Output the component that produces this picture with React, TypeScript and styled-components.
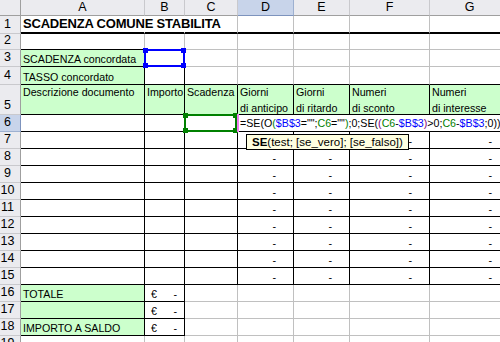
import React from 'react';
import styled, { createGlobalStyle } from 'styled-components';

const Global = createGlobalStyle`
  html, body { margin: 0; padding: 0; background: #ffffff; overflow: hidden; }
  body { width: 500px; height: 342px; font-family: "Liberation Sans", Arial, sans-serif; }
`;

const GRID = '#c0c0c0';
const INK = '#000000';
const GREEN = '#ccffcc';
const NONE = 'transparent';
const HEAD_BG = '#ebebef';
const HEAD_SEL = '#c8d4ea';

const COLS = [21, 124, 40, 53, 56, 56, 80, 80];
// header row + rows 1..19 (heights include bottom border)
const ROW_H = [16, 18, 16, 17, 18, 30, 17, 17, 17, 17, 17, 17, 17, 17, 17, 17, 17, 17, 17, 17];

const Sheet = styled.div`
  position: relative;
  width: 500px;
  height: 342px;
  overflow: hidden;
  display: grid;
  grid-template-columns: ${COLS.map((c) => `${c}px`).join(' ')};
  grid-template-rows: ${ROW_H.map((h) => `${h}px`).join(' ')};
  font-family: "Liberation Sans", Arial, sans-serif;
  color: #000;
`;

const Corner = styled.div`
  box-sizing: border-box;
  background: ${HEAD_BG};
  border-right: 1px solid #9f9f9f;
  border-bottom: 1px solid #9f9f9f;
`;

const ColHead = styled.div<{ $sel?: boolean }>`
  box-sizing: border-box;
  background: ${(p) => (p.$sel ? HEAD_SEL : HEAD_BG)};
  border-right: 1px solid ${(p) => (p.$sel ? '#9db0d0' : '#c9c9cd')};
  border-bottom: 1px solid ${(p) => (p.$sel ? '#7d93bd' : '#9f9f9f')};
  display: flex;
  align-items: center;
  justify-content: center;
  font-size: 12.5px;
  line-height: 15px;
`;

const RowHead = styled.div<{ $sel?: boolean }>`
  box-sizing: border-box;
  background: ${(p) => (p.$sel ? HEAD_SEL : HEAD_BG)};
  border-right: 1px solid ${(p) => (p.$sel ? '#7d93bd' : '#9f9f9f')};
  border-bottom: 1px solid ${(p) => (p.$sel ? '#9db0d0' : '#c9c9cd')};
  display: flex;
  align-items: flex-end;
  justify-content: center;
  padding: 0 5px 2px 0;
  font-size: 12.5px;
  line-height: 14px;
  white-space: nowrap;
`;

const Cell = styled.div<{
  $bg?: string;
  $r: string;
  $b: string;
  $bw?: number;
  $al?: 'l' | 'r' | 'sp';
  $top?: boolean;
}>`
  box-sizing: border-box;
  min-width: 0;
  background: ${(p) => p.$bg || NONE};
  border-right: 1px solid ${(p) => p.$r};
  border-bottom: ${(p) => p.$bw || 1}px solid ${(p) => p.$b};
  display: flex;
  align-items: ${(p) => (p.$top ? 'flex-start' : 'flex-end')};
  justify-content: ${(p) => (p.$al === 'r' ? 'flex-end' : p.$al === 'sp' ? 'space-between' : 'flex-start')};
  padding: ${(p) => (p.$al === 'r' ? '0 17px 0 0' : p.$al === 'sp' ? '0 7px 0 6px' : '0 1px 0 2px')};
  font-size: 10.67px;
  line-height: ${(p) => (p.$top ? '16px' : '13px')};
  white-space: nowrap;
`;

const Title = styled.span`
  font-size: 13px;
  font-weight: bold;
  line-height: 15px;
  padding-bottom: 1px;
  letter-spacing: -0.2px;
`;

const Wrap = styled.span`
  margin-top: -1px;
`;

/* overlays: range references and in-cell editor lying over the grid */
const RangeBox = styled.div<{ $c: string }>`
  position: absolute;
  box-sizing: border-box;
  border: 2px solid ${(p) => p.$c};
  pointer-events: none;
`;

const Handle = styled.span<{ $c: string; $x: 'l' | 'r'; $y: 't' | 'b' }>`
  position: absolute;
  width: 5px;
  height: 5px;
  background: ${(p) => p.$c};
  ${(p) => (p.$x === 'l' ? 'left: -3px;' : 'right: -3px;')}
  ${(p) => (p.$y === 't' ? 'top: -3px;' : 'bottom: -3px;')}
`;

const EditMark = styled.div`
  position: absolute;
  left: 237px;
  top: 114px;
  width: 2px;
  height: 18px;
  background: #f080f0;
`;

const Editor = styled.div`
  position: absolute;
  left: 239px;
  top: 115px;
  width: 270px;
  height: 16px;
  background: #ffffff;
  padding-left: 1px;
  font-size: 10.67px;
  line-height: 16px;
  white-space: nowrap;
`;

const Tok = styled.span<{ $c: string }>`
  color: ${(p) => p.$c};
`;

const Tip = styled.div`
  position: absolute;
  left: 246px;
  top: 134px;
  height: 16px;
  box-sizing: border-box;
  background: #ffffe1;
  border: 1px solid #000000;
  padding: 0 5px;
  font-size: 11.5px;
  line-height: 14px;
  white-space: nowrap;
`;

type CellDef = {
  t?: React.ReactNode;
  bg?: string;
  r: string;
  b: string;
  bw?: number;
  al?: 'l' | 'r' | 'sp';
  top?: boolean;
};

const grid = (): CellDef => ({ r: GRID, b: GRID });
const boxed = (t?: React.ReactNode, bg?: string, al?: 'l' | 'r' | 'sp'): CellDef => ({ t, bg, r: INK, b: INK, al });

const Euro = () => (
  <>
    <span>€</span>
    <span>-</span>
  </>
);

const rows: CellDef[][] = [];
// row 1
rows.push([
  { t: <Title>SCADENZA COMUNE STABILITA</Title>, r: NONE, b: INK, bw: 2 },
  { r: NONE, b: INK, bw: 2 },
  ...Array.from({ length: 5 }, () => ({ r: GRID, b: INK, bw: 2 })),
]);
// row 2
rows.push([{ r: GRID, b: INK }, { r: GRID, b: INK }, ...Array.from({ length: 5 }, grid)]);
// row 3
rows.push([boxed('SCADENZA concordata', GREEN), boxed(), ...Array.from({ length: 5 }, grid)]);
// row 4
rows.push([boxed('TASSO concordato', GREEN), boxed(), ...Array.from({ length: 5 }, () => ({ r: GRID, b: INK }))]);
// row 5
const two = (a: string, b: string) => (
  <Wrap>
    {a}
    <br />
    {b}
  </Wrap>
);
rows.push(
  [
    <Wrap>Descrizione documento</Wrap>,
    <Wrap>Importo</Wrap>,
    <Wrap>Scadenza</Wrap>,
    two('Giorni', 'di anticipo'),
    two('Giorni', 'di ritardo'),
    two('Numeri', 'di sconto'),
    two('Numeri', 'di interesse'),
  ].map((t) => ({ t, bg: GREEN, r: INK, b: INK, top: true }))
);
// rows 6..15 (row 6 is under the editor, D7/E7 under the tooltip)
for (let i = 6; i <= 15; i++) {
  const dash = i >= 7 ? '-' : undefined;
  const hidden = i === 7 ? undefined : dash;
  rows.push([
    boxed(),
    boxed(),
    boxed(),
    boxed(hidden, undefined, 'r'),
    boxed(hidden, undefined, 'r'),
    boxed(dash, undefined, 'r'),
    boxed(dash, undefined, 'r'),
  ]);
}
// rows 16..18
['TOTALE', '', 'IMPORTO A SALDO'].forEach((label) => {
  rows.push([boxed(label, GREEN), boxed(<Euro />, undefined, 'sp'), ...Array.from({ length: 5 }, grid)]);
});
// row 19
rows.push(Array.from({ length: 7 }, grid));

const LETTERS = ['A', 'B', 'C', 'D', 'E', 'F', 'G'];

export default function App() {
  return (
    <>
      <Global />
      <Sheet>
        <Corner />
        {LETTERS.map((l) => (
          <ColHead key={l} $sel={l === 'D'}>
            {l}
          </ColHead>
        ))}
        {rows.map((cells, ri) => (
          <React.Fragment key={ri}>
            <RowHead $sel={ri + 1 === 6}>{ri + 1}</RowHead>
            {cells.map((c, ci) => (
              <Cell key={ci} $bg={c.bg} $r={c.r} $b={c.b} $bw={c.bw} $al={c.al} $top={c.top}>
                {c.t}
              </Cell>
            ))}
          </React.Fragment>
        ))}

        <RangeBox $c="#0000ff" style={{ left: 144, top: 49, width: 41, height: 18 }}>
          <Handle $c="#0000ff" $x="l" $y="t" />
          <Handle $c="#0000ff" $x="r" $y="t" />
          <Handle $c="#0000ff" $x="l" $y="b" />
          <Handle $c="#0000ff" $x="r" $y="b" />
        </RangeBox>
        <RangeBox $c="#008000" style={{ left: 184, top: 114, width: 53, height: 18 }}>
          <Handle $c="#008000" $x="l" $y="t" />
          <Handle $c="#008000" $x="r" $y="t" />
          <Handle $c="#008000" $x="l" $y="b" />
          <Handle $c="#008000" $x="r" $y="b" />
        </RangeBox>
        <EditMark />
        <Editor>
          =SE(O<Tok $c="#008000">(</Tok>
          <Tok $c="#0000ff">$B$3</Tok>="";<Tok $c="#008000">C6</Tok>=""<Tok $c="#008000">)</Tok>;0;SE(
          <Tok $c="#800080">(</Tok>
          <Tok $c="#008000">C6</Tok>-<Tok $c="#0000ff">$B$3</Tok>
          <Tok $c="#800080">)</Tok>&gt;0;<Tok $c="#008000">C6</Tok>-<Tok $c="#0000ff">$B$3</Tok>;0))
        </Editor>
        <Tip>
          <b>SE</b>(test; [se_vero]; [se_falso])
        </Tip>
      </Sheet>
    </>
  );
}
